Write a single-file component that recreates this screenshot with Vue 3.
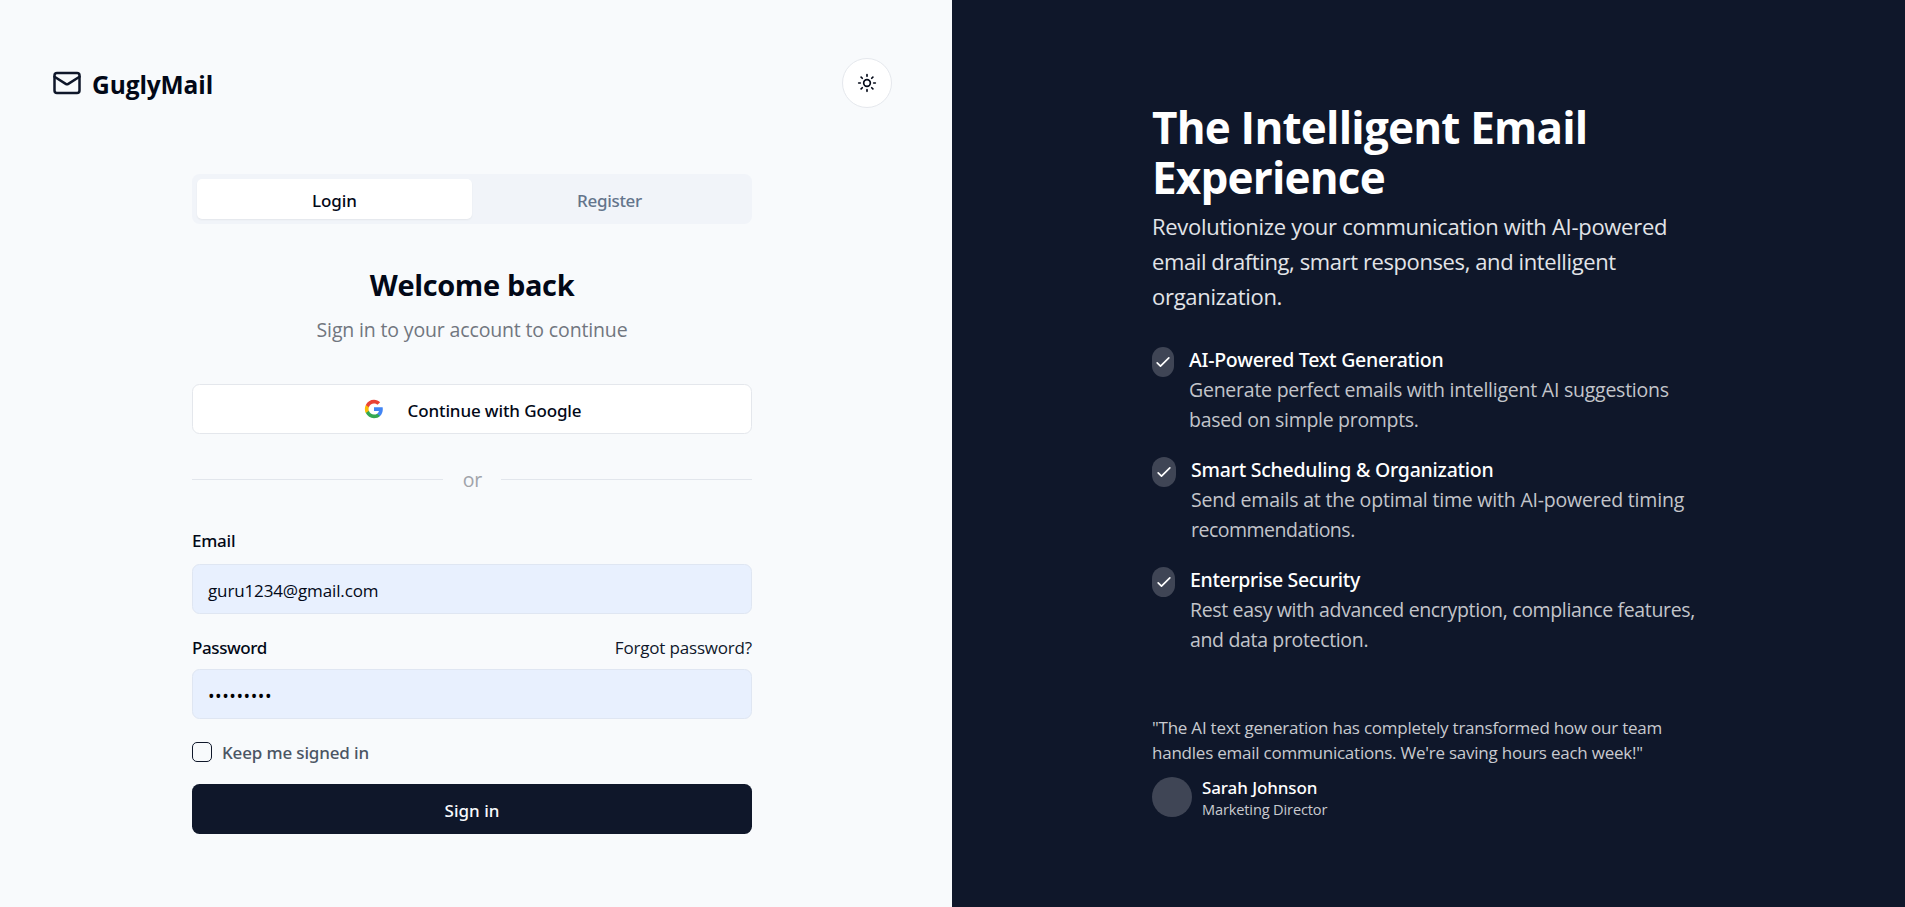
<script setup>
import { ref } from 'vue'

const tab = ref('login')
const features = [
  { key: 'text', title: 'AI-Powered Text Generation', lines: ['Generate perfect emails with intelligent AI suggestions', 'based on simple prompts.'] },
  { key: 'schedule', title: 'Smart Scheduling & Organization', lines: ['Send emails at the optimal time with AI-powered timing', 'recommendations.'] },
  { key: 'security', title: 'Enterprise Security', lines: ['Rest easy with advanced encryption, compliance features,', 'and data protection.'] },
]
</script>

<template>
  <main class="page">
    <section class="auth">
      <header class="top">
        <div class="brand">
          <svg class="mail" viewBox="0 0 24 24" fill="none" stroke="currentColor" stroke-width="2" stroke-linecap="round" stroke-linejoin="round">
            <rect width="20" height="16" x="2" y="4" rx="2" />
            <path d="m22 7-8.97 5.7a1.94 1.94 0 0 1-2.06 0L2 7" />
          </svg>
          <span class="brand-name">GuglyMail</span>
        </div>
        <button class="theme" aria-label="Toggle theme">
          <svg viewBox="0 0 24 24" fill="none" stroke="currentColor" stroke-width="2" stroke-linecap="round" stroke-linejoin="round">
            <circle cx="12" cy="12" r="4" />
            <path d="M12 2v2M12 20v2M4.93 4.93l1.41 1.41M17.66 17.66l1.41 1.41M2 12h2M20 12h2M6.34 17.66l-1.41 1.41M19.07 4.93l-1.41 1.41" />
          </svg>
        </button>
      </header>

      <div class="column">
        <div class="tabs">
          <button class="tab login-tab" :class="{ active: tab === 'login' }" @click="tab = 'login'">Login</button>
          <button class="tab register-tab" :class="{ active: tab === 'register' }" @click="tab = 'register'">Register</button>
        </div>

        <h1 class="welcome">Welcome back</h1>
        <p class="lead">Sign in to your account to continue</p>

        <button class="google">
          <svg viewBox="0 0 24 24">
            <path fill="#4285F4" d="M22.56 12.25c0-.78-.07-1.53-.2-2.25H12v4.26h5.92c-.26 1.37-1.04 2.53-2.21 3.31v2.77h3.57c2.08-1.92 3.28-4.74 3.28-8.09z" />
            <path fill="#34A853" d="M12 23c2.97 0 5.46-.98 7.28-2.66l-3.57-2.77c-.98.66-2.23 1.06-3.71 1.06-2.86 0-5.29-1.93-6.16-4.53H2.18v2.84C3.99 20.53 7.7 23 12 23z" />
            <path fill="#FBBC05" d="M5.84 14.09c-.22-.66-.35-1.36-.35-2.09s.13-1.43.35-2.09V7.07H2.18C1.43 8.55 1 10.22 1 12s.43 3.45 1.18 4.93l2.85-2.22.81-.62z" />
            <path fill="#EA4335" d="M12 5.38c1.62 0 3.06.56 4.21 1.64l3.15-3.15C17.45 2.09 14.97 1 12 1 7.7 1 3.99 3.47 2.18 7.07l3.66 2.84c.87-2.6 3.3-4.53 6.16-4.53z" />
          </svg>
          <span>Continue with Google</span>
        </button>

        <div class="divider"><i></i><span>or</span><i></i></div>

        <label class="label email-label">Email</label>
        <div class="field email-field">guru1234@gmail.com</div>

        <div class="password-row">
          <label class="label password-label">Password</label>
          <a class="forgot">Forgot password?</a>
        </div>
        <div class="field password-field"><span class="dots">•••••••••</span></div>

        <label class="keep"><span class="box"></span><span class="keep-text">Keep me signed in</span></label>

        <button class="submit"><span>Sign in</span></button>
      </div>
    </section>

    <aside class="promo">
      <h2 class="headline">The Intelligent Email<br />Experience</h2>
      <p class="pitch">Revolutionize your communication with AI-powered<br /><span class="tight">email drafting, smart responses, and intelligent</span><br />organization.</p>

      <ul class="features">
        <li v-for="f in features" :key="f.key" class="feature" :class="f.key">
          <span class="pill">
            <svg viewBox="0 0 24 24" fill="none" stroke="currentColor" stroke-width="2" stroke-linecap="round" stroke-linejoin="round"><path d="M5 13l4 4L19 7" /></svg>
          </span>
          <div>
            <h3 class="f-title">{{ f.title }}</h3>
            <p v-for="line in f.lines" :key="line" class="f-line">{{ line }}</p>
          </div>
        </li>
      </ul>

      <p class="quote">"The AI text generation has completely transformed how our team<br />handles email communications. We're saving hours each week!"</p>
      <div class="author">
        <span class="avatar"></span>
        <div>
          <p class="name">Sarah Johnson</p>
          <p class="role">Marketing Director</p>
        </div>
      </div>
    </aside>
  </main>
</template>

<style>
body { margin: 0; }
</style>

<style scoped>
.page {
  display: flex;
  width: 1905px;
  height: 907px;
  overflow: hidden;
  font-family: "Open Sans", "Noto Sans", sans-serif;
  color: #020817;
}
.page * { box-sizing: border-box; }
h1, h2, h3, p, ul { margin: 0; padding: 0; font-weight: 400; }
button { font: inherit; color: inherit; border: 0; padding: 0; }
svg { display: block; flex: none; }

.auth { width: 952px; flex: none; background: #f8fafc; }
.top {
  display: flex; justify-content: space-between; align-items: center;
  height: 50px; margin: 58px 60px 0 52px;
}
.brand { display: flex; align-items: center; gap: 10px; }
.mail { width: 30px; height: 30px; color: #0f172a; }
.brand-name { font-size: 24.5px; font-weight: 700; line-height: 35px; padding-top: 3px; letter-spacing: -0.1px; }
.theme {
  width: 50px; height: 50px; border-radius: 50%; background: #fff;
  border: 1px solid #e5e8ed; display: flex; align-items: center; justify-content: center;
}
.theme svg { width: 20px; height: 20px; }

.column { width: 560px; margin: 66px 0 0 192px; display: flex; flex-direction: column; }
.tabs { height: 50px; padding: 5px; border-radius: 7.5px; background: #f1f4f9; display: grid; grid-template-columns: 1fr 1fr; }
.tab {
  background: transparent; color: #64748b; border-radius: 5px; padding-top: 3px;
  font: 500 17px/25px "Noto Sans", sans-serif;
}
.login-tab { letter-spacing: -0.1px; }
.register-tab { letter-spacing: -0.3px; }
.tab.active { background: #fff; color: #020817; box-shadow: 0 1px 2px rgba(0, 0, 0, .06); }

.welcome { margin-top: 42px; font-size: 29px; font-weight: 700; line-height: 38px; letter-spacing: -0.35px; text-align: center; }
.lead { margin-top: 11px; font-size: 19.5px; line-height: 30px; letter-spacing: -0.15px; text-align: center; color: #71767f; }

.google {
  margin-top: 39px; height: 50px; border: 1px solid #e4e7ec; border-radius: 7.5px; background: #fff;
  display: flex; align-items: center; justify-content: center; gap: 24px; padding-left: 1px;
  font: 500 17px/25px "Noto Sans", sans-serif; letter-spacing: -0.12px;
}
.google svg { width: 20px; height: 20px; }
.google span { padding-top: 3px; }

.divider { margin-top: 30px; height: 31px; display: flex; align-items: center; }
.divider i { flex: 1; height: 1px; background: #e2e6ec; }
.divider span { width: 58px; padding-left: 1px; text-align: center; font-size: 19.5px; line-height: 31px; color: #a0a3aa; }

.label { font: 500 17px/25px "Noto Sans", sans-serif; }
.email-label { margin-top: 33px; letter-spacing: -0.25px; }
.field {
  height: 50px; border: 1px solid #dfe6f2; border-radius: 7.5px; background: #e8f0fe;
  padding: 3px 15px 0; font-size: 17px; line-height: 46px;
}
.email-field { margin-top: 11px; letter-spacing: -0.13px; }
.password-row { margin-top: 21px; height: 25px; display: flex; justify-content: space-between; }
.password-label { letter-spacing: -0.4px; }
.forgot { font-size: 17px; line-height: 25px; letter-spacing: -0.18px; color: #0f172a; }
.password-field { margin-top: 9px; }
.dots { font-size: 17.5px; letter-spacing: 0.54px; color: #000; }

.keep { margin-top: 23px; height: 20px; display: flex; align-items: center; gap: 10px; }
.box { width: 20px; height: 20px; border: 1px solid #0f172a; border-radius: 5px; }
.keep-text { font: 500 17px/20px "Noto Sans", sans-serif; padding-top: 2px; letter-spacing: -0.15px; color: #4b5563; }

.submit {
  margin-top: 22px; height: 50px; border-radius: 7.5px; background: #0f172a; color: #f8fafc;
  display: flex; align-items: center; justify-content: center;
  font: 500 17px/25px "Noto Sans", sans-serif;
}
.submit span { padding-top: 3px; }

.promo { flex: 1; background: #0f172a; color: #fff; padding: 102px 0 0 200px; }
.headline { font-size: 44px; font-weight: 700; line-height: 50px; letter-spacing: -0.8px; }
.pitch { margin-top: 7px; font-size: 22px; line-height: 35px; letter-spacing: -0.29px; color: #e2e4e8; }
.tight { letter-spacing: -0.4px; }

.features { list-style: none; margin-top: 31px; display: flex; flex-direction: column; gap: 20px; }
.feature { display: flex; gap: 15px; align-items: flex-start; }
.pill {
  width: 22px; height: 30px; margin-top: 2px; border-radius: 15px; background: #3f4555;
  display: flex; align-items: center; justify-content: center; flex: none;
}
.schedule .pill { width: 24px; }
.security .pill { width: 23px; }
.pill svg { width: 20px; height: 20px; }
.f-title { font: 500 19.5px/30px "Noto Sans", sans-serif; letter-spacing: -0.24px; }
.f-line { font-size: 19.5px; line-height: 30px; letter-spacing: -0.24px; color: #c3c5ca; }
.f-line:last-child { letter-spacing: -0.3px; }
.schedule .f-title { letter-spacing: -0.24px; }
.schedule .f-line { letter-spacing: -0.2px; }
.schedule .f-line:last-child { letter-spacing: -0.5px; }
.security .f-title, .security .f-line { letter-spacing: -0.34px; }

.quote { margin-top: 60px; font-size: 17px; line-height: 25px; letter-spacing: -0.23px; color: #c8cacf; }
.author { margin-top: 12px; height: 40px; display: flex; gap: 10px; }
.avatar { width: 40px; height: 40px; border-radius: 50%; background: #3f4555; }
.name { font: 500 17px/21px "Noto Sans", sans-serif; letter-spacing: -0.1px; }
.role { font-size: 14.6px; line-height: 22px; letter-spacing: -0.15px; color: #c8cacf; }
</style>
